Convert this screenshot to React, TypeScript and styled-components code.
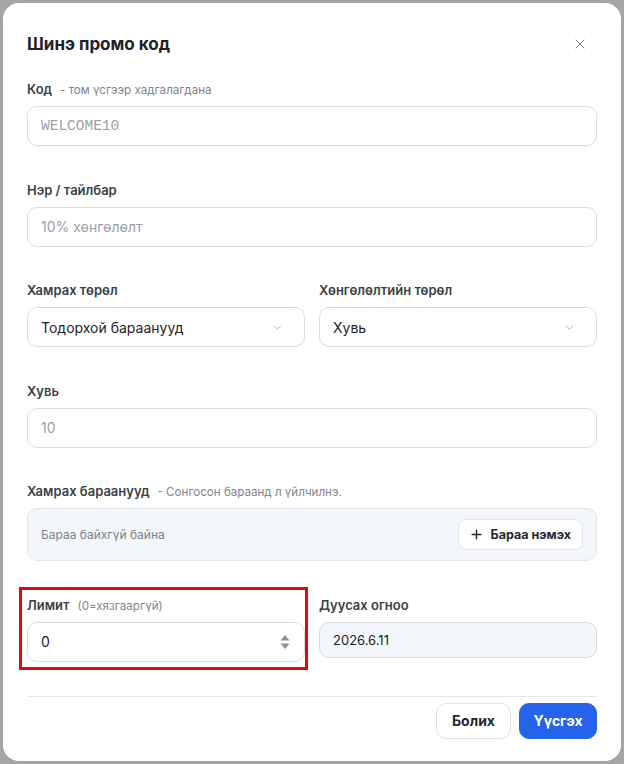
import styled, { createGlobalStyle } from 'styled-components';
import { ChevronDown, Plus, X } from 'lucide-react';

const GlobalStyle = createGlobalStyle`
  body {
    margin: 0;
    background: #a4a5a7;
    font-family: Inter, "Noto Sans", sans-serif;
  }
  * { box-sizing: border-box; }
`;

const Backdrop = styled.div`
  width: 624px;
  height: 764px;
  padding: 3px;
`;

const Modal = styled.div`
  width: 618px;
  height: 758px;
  background: #ffffff;
  border-radius: 16px;
  padding: 30px 24px 0;
  display: flex;
  flex-direction: column;
`;

const Header = styled.div`
  display: flex;
  align-items: center;
  justify-content: space-between;
  height: 22px;
  margin-bottom: 26px;
`;

const Title = styled.h2`
  margin: 0;
  font-size: 17px;
  font-weight: 700;
  color: #1f2328;
`;

const CloseButton = styled.button`
  border: none;
  background: none;
  padding: 0;
  margin-right: 9px;
  color: #7d828a;
  display: flex;
  cursor: pointer;
`;

const Fields = styled.div`
  display: flex;
  flex-direction: column;
  gap: 35.6px;
`;

const Field = styled.div`
  display: flex;
  flex-direction: column;
  gap: 8px;
  min-width: 0;
`;

const Label = styled.label`
  display: flex;
  align-items: baseline;
  gap: 8px;
  height: 17px;
  font-size: 13px;
  font-weight: 600;
  color: #3a3f47;
`;

const Hint = styled.span`
  font-size: 11.6px;
  font-weight: 400;
  color: #80858d;
`;

const Input = styled.input<{ $mono?: boolean }>`
  width: 100%;
  height: 40px;
  border: 1px solid #d9dde3;
  border-radius: 10px;
  padding: 0 13px;
  font-family: ${p => (p.$mono ? '"Liberation Mono", "DejaVu Sans Mono", monospace' : 'Inter, "Noto Sans", sans-serif')};
  font-size: ${p => (p.$mono ? '14.5px' : '14px')};
  color: #1f2328;
  background: #fff;
  outline: none;
  &::placeholder {
    color: #9a9fa7;
  }
`;

const Row = styled.div`
  display: grid;
  grid-template-columns: 1fr 1fr;
  gap: 14px;
`;

const SelectBox = styled.div`
  height: 40px;
  border: 1px solid #d9dde3;
  border-radius: 10px;
  padding: 0 20px 0 13px;
  display: flex;
  align-items: center;
  justify-content: space-between;
  font-size: 14px;
  color: #1f2328;
  svg {
    color: #9aa0a8;
  }
`;

const ProductsBox = styled.div`
  height: 53px;
  border: 1px solid #e1e6ed;
  border-radius: 10px;
  background: #f3f6fa;
  padding: 0 13px;
  display: flex;
  align-items: center;
  justify-content: space-between;
`;

const EmptyText = styled.span`
  font-size: 12px;
  color: #7c828a;
`;

const AddButton = styled.button`
  height: 31px;
  padding: 0 11px 0 10px;
  border: 1px solid #e2e5ea;
  border-radius: 8px;
  background: #fff;
  display: flex;
  align-items: center;
  gap: 7px;
  font-family: inherit;
  font-size: 12.5px;
  font-weight: 700;
  color: #23272e;
`;

const Highlight = styled.div`
  margin: -10px -3px -8px -8px;
  padding: 7px 0 5px 5px;
  border: 3px solid #e3070d;
`;

const NumberBox = styled.div`
  height: 40px;
  border: 1px solid #d9dde3;
  border-radius: 10px;
  padding: 0 14px 0 13px;
  display: flex;
  align-items: center;
  justify-content: space-between;
  font-size: 14px;
  color: #1f2328;
`;

const DateBox = styled.div`
  height: 36px;
  border: 1px solid #d5dbe3;
  border-radius: 10px;
  background: #f3f6fa;
  padding: 0 13px;
  display: flex;
  align-items: center;
  font-size: 13px;
  color: #1f2328;
`;

const Footer = styled.div`
  margin-top: 34px;
  border-top: 1px solid #e3e6ea;
  padding-top: 6px;
  display: flex;
  justify-content: flex-end;
  gap: 8px;
`;

const Button = styled.button<{ $primary?: boolean }>`
  height: 36px;
  width: ${p => (p.$primary ? '78px' : '75px')};
  padding: 0;
  border-radius: 10px;
  border: 1px solid ${p => (p.$primary ? '#2563eb' : '#dfe2e7')};
  background: ${p => (p.$primary ? '#2563eb' : '#fff')};
  color: ${p => (p.$primary ? '#fff' : '#23272e')};
  font-family: inherit;
  font-size: 14px;
  font-weight: 700;
`;

function Spinner () {
  return (
    <svg width='10' height='18' viewBox='0 0 10 18'>
      <path d='M5 2 L9.5 7.5 H0.5 Z' fill='#8e939b' />
      <path d='M5 16 L9.5 10.5 H0.5 Z' fill='#8e939b' />
    </svg>
  );
}

function App () {
  return (
    <>
      <GlobalStyle />
      <Backdrop>
        <Modal>
          <Header>
            <Title>Шинэ промо код</Title>
            <CloseButton aria-label='close'>
              <X size={16} strokeWidth={1.5} />
            </CloseButton>
          </Header>

          <Fields>
            <Field>
              <Label>
                Код <Hint>- том үсгээр хадгалагдана</Hint>
              </Label>
              <Input $mono placeholder='WELCOME10' />
            </Field>

            <Field>
              <Label>Нэр / тайлбар</Label>
              <Input placeholder='10% хөнгөлөлт' />
            </Field>

            <Row>
              <Field>
                <Label>Хамрах төрөл</Label>
                <SelectBox>
                  Тодорхой бараанууд
                  <ChevronDown size={13} strokeWidth={1.5} />
                </SelectBox>
              </Field>
              <Field>
                <Label>Хөнгөлөлтийн төрөл</Label>
                <SelectBox>
                  Хувь
                  <ChevronDown size={13} strokeWidth={1.5} />
                </SelectBox>
              </Field>
            </Row>

            <Field>
              <Label>Хувь</Label>
              <Input placeholder='10' />
            </Field>

            <Field>
              <Label>
                Хамрах бараанууд <Hint>- Сонгосон бараанд л үйлчилнэ.</Hint>
              </Label>
              <ProductsBox>
                <EmptyText>Бараа байхгүй байна</EmptyText>
                <AddButton>
                  <Plus size={15} strokeWidth={2.2} />
                  Бараа нэмэх
                </AddButton>
              </ProductsBox>
            </Field>

            <Row>
              <Highlight>
                <Field>
                  <Label>
                    Лимит <Hint>(0=хязгааргүй)</Hint>
                  </Label>
                  <NumberBox>
                    0
                    <Spinner />
                  </NumberBox>
                </Field>
              </Highlight>
              <Field>
                <Label>Дуусах огноо</Label>
                <DateBox>2026.6.11</DateBox>
              </Field>
            </Row>
          </Fields>

          <Footer>
            <Button>Болих</Button>
            <Button $primary>Үүсгэх</Button>
          </Footer>
        </Modal>
      </Backdrop>
    </>
  );
}

export default App;
